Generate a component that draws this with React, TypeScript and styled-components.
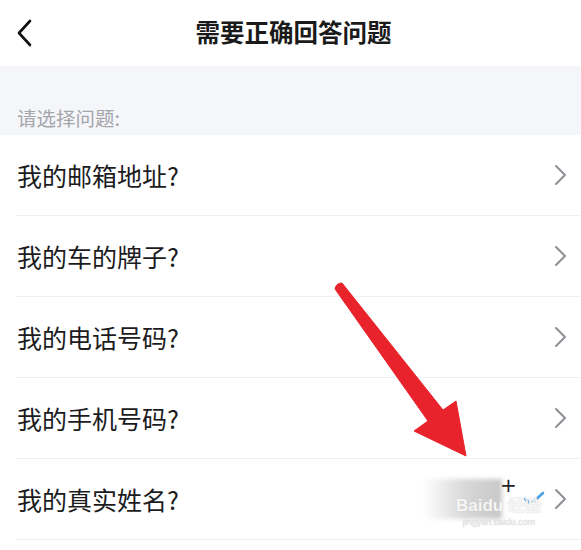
import React from "react";
import styled, { createGlobalStyle } from "styled-components";

const Global = createGlobalStyle`
  html, body { margin: 0; padding: 0; background: #ffffff; }
  body { font-family: "Noto Sans CJK SC", "Noto Sans", sans-serif; }
`;

const Page = styled.div`
  position: relative;
  width: 581px;
  height: 550px;
  overflow: hidden;
  background: #ffffff;
`;

const Header = styled.header`
  height: 66px;
  display: flex;
  align-items: center;
  justify-content: center;
  position: relative;
  background: #ffffff;
  padding-left: 6px;
  box-sizing: border-box;
`;

const BackButton = styled.div`
  position: absolute;
  left: 14px;
  top: 18px;
  width: 22px;
  height: 30px;
  display: flex;
  align-items: center;
  justify-content: center;
`;

const Title = styled.h1`
  margin: 0;
  font-size: 24.5px;
  font-weight: 700;
  color: #1a1a1a;
  line-height: 1;
  padding-bottom: 2px;
`;

const Section = styled.div`
  background: #f5f6fa;
  height: 69px;
  display: flex;
  align-items: flex-end;
  padding: 0 17px 4px;
  box-sizing: border-box;
`;

const SectionLabel = styled.span`
  font-size: 19.5px;
  color: #a3a5ab;
  line-height: 26px;
`;

const List = styled.ul`
  list-style: none;
  margin: 0;
  padding: 0 0 0 16px;
`;

const Row = styled.li`
  height: 81px;
  display: flex;
  align-items: center;
  justify-content: space-between;
  border-bottom: 1px solid #f0f0f2;
  box-sizing: border-box;
  padding-right: 14px;
  position: relative;
`;

const RowText = styled.span`
  font-size: 25px;
  color: #1c1c1e;
  padding-left: 1px;
  line-height: 1;
`;

const Trail = styled.div`
  display: flex;
  align-items: center;
  gap: 8px;
`;

const BlurBox = styled.div`
  position: absolute;
  left: 406px;
  top: 20px;
  width: 80px;
  height: 40px;
  background: linear-gradient(90deg, rgba(255,255,255,1) 0%, rgba(215,215,215,1) 55%, rgba(200,200,200,1) 100%);
  filter: blur(2px);
`;

const Plus = styled.span`
  position: absolute;
  left: 484px;
  top: 16px;
  font-size: 20px;
  color: #222;
  font-family: "DejaVu Sans", sans-serif;
  line-height: 1;
`;

const Watermark = styled.div`
  position: absolute;
  left: 440px;
  top: 38px;
  display: flex;
  flex-direction: column;
  align-items: center;
  color: rgba(255, 255, 255, 0.85);
  text-shadow: 0 0 1px rgba(190, 190, 190, 0.9);
  pointer-events: none;
`;

const WmMain = styled.span`
  font-family: "Liberation Sans", sans-serif;
  font-size: 17px;
  font-weight: 700;
  line-height: 1;
`;

const WmSub = styled.span`
  font-family: "Liberation Sans", sans-serif;
  font-size: 9px;
  margin-top: 4px;
  color: rgba(235, 235, 235, 0.9);
  line-height: 1;
`;

const ArrowLayer = styled.svg`
  position: absolute;
  left: 0;
  top: 0;
  pointer-events: none;
`;

const Chevron = () => (
  <svg width="14" height="22" viewBox="0 0 14 22">
    <path d="M3 2 L12 11 L3 20" fill="none" stroke="#8e9097" strokeWidth="2" strokeLinecap="round" strokeLinejoin="round" />
  </svg>
);

const Check = () => (
  <svg width="22" height="16" viewBox="0 0 22 16">
    <path d="M2 8 L8 13 L20 2" fill="none" stroke="#4a9fe0" strokeWidth="2.6" strokeLinecap="round" strokeLinejoin="round" />
  </svg>
);

const questions = [
  "我的邮箱地址?",
  "我的车的牌子?",
  "我的电话号码?",
  "我的手机号码?",
  "我的真实姓名?",
];

export default function App() {
  return (
    <Page>
      <Global />
      <Header>
        <BackButton>
          <svg width="18" height="28" viewBox="0 0 18 28">
            <path d="M14 2 L3 14 L14 26" fill="none" stroke="#111" strokeWidth="2.6" strokeLinecap="round" strokeLinejoin="round" />
          </svg>
        </BackButton>
        <Title>需要正确回答问题</Title>
      </Header>
      <Section>
        <SectionLabel>请选择问题:</SectionLabel>
      </Section>
      <List>
        {questions.map((q, i) => (
          <Row key={q}>
            <RowText>{q}</RowText>
            {i === 4 && (
              <>
                <BlurBox />
                <Plus>+</Plus>
                <Watermark>
                  <WmMain>Baidu 经验</WmMain>
                  <WmSub>jingyan.baidu.com</WmSub>
                </Watermark>
              </>
            )}
            <Trail>
              {i === 4 && <Check />}
              <Chevron />
            </Trail>
          </Row>
        ))}
      </List>
      <ArrowLayer width="581" height="550" viewBox="0 0 581 550">
        <path
          d="M335 289 Q336 283 342 283 L443 410 L456 401 L466 456 L414 431 L428 421 L335 289 Z"
          fill="#e8232b"
          stroke="#e8232b"
          strokeWidth="1"
          strokeLinejoin="round"
        />
      </ArrowLayer>
    </Page>
  );
}
